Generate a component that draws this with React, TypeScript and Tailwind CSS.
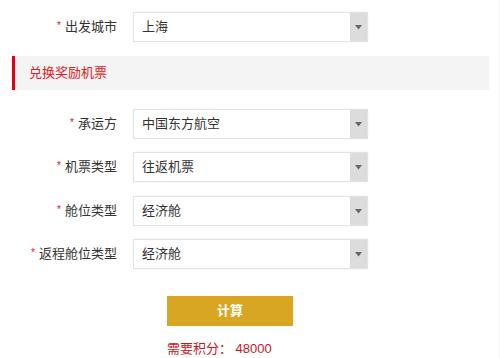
const font = { fontFamily: '"Liberation Sans", "Noto Sans CJK SC", sans-serif' };

interface SelectRowProps {
  label: string;
  value: string;
  className?: string;
}

function SelectRow({ label, value, className = '' }: SelectRowProps) {
  return (
    <div className={`flex items-center h-[30px] ${className}`}>
      <div className="w-[117px] flex justify-end items-center text-[13px] text-[#333]">
        <span className="text-[#d7141a] text-[10px] mr-[4px] relative -top-[2px]">*</span>
        <span>{label}</span>
      </div>
      <div className="ml-[16px] w-[235px] h-[30px] flex border border-[#e2e2e2] bg-white shadow-[0_0_2px_rgba(0,0,0,0.06)]">
        <div className="flex-1 flex items-center pl-[8px] text-[13px] text-[#333]">{value}</div>
        <div className="w-[17px] h-full bg-[#dcdcdc] flex items-center justify-center">
          <svg width="7" height="5" viewBox="0 0 7 5">
            <path d="M0 0 H7 L3.5 4.5 Z" fill="#666" />
          </svg>
        </div>
      </div>
    </div>
  );
}

export default function App() {
  return (
    <div className="w-[500px] h-[358px] bg-white overflow-hidden border-r border-[#f2f2f2]" style={font}>
      <SelectRow label="出发城市" value="上海" className="mt-[12px]" />

      <div className="mt-[14px] ml-[12px] w-[477px] h-[34px] border-l-[3px] border-[#e60012] bg-[#f4f4f4] flex items-center pl-[14px] text-[13px] text-[#e02020]">
        兑换奖励机票
      </div>

      <SelectRow label="承运方" value="中国东方航空" className="mt-[19px]" />
      <SelectRow label="机票类型" value="往返机票" className="mt-[13px]" />
      <SelectRow label="舱位类型" value="经济舱" className="mt-[14px]" />
      <SelectRow label="返程舱位类型" value="经济舱" className="mt-[13px]" />

      <button className="block mt-[27px] ml-[167px] w-[126px] h-[30px] bg-[#d9a623] text-white text-[13px] font-bold">
        计算
      </button>

      <div className="mt-[15px] ml-[167px] text-[13px] leading-[16px] text-[#c8161d]">需要积分： 48000</div>
    </div>
  );
}
